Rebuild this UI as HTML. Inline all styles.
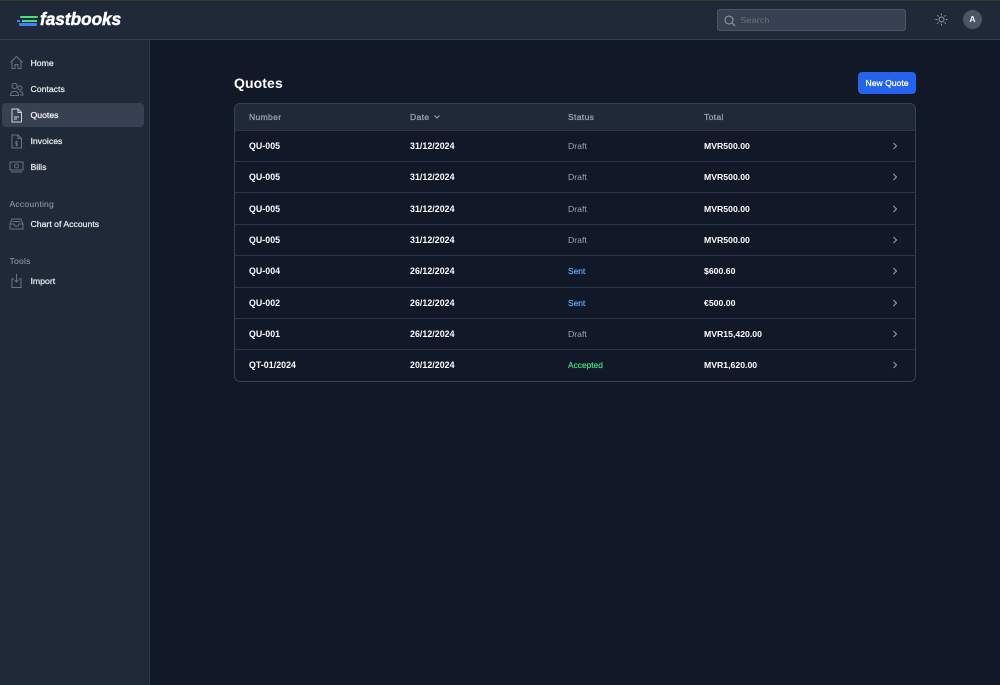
<!DOCTYPE html>
<html><head><meta charset="utf-8"><style>
*{box-sizing:border-box;margin:0;padding:0}
html,body{width:1000px;height:685px;overflow:hidden;background:#111827;font-family:"Liberation Sans",sans-serif;color:#fff}
.a{position:absolute;white-space:nowrap}
.nav{font-size:8.7px;color:#e5e7eb;left:30.5px;line-height:12px;-webkit-text-stroke:.25px #e5e7eb}
.sec{font-size:8.6px;color:#9ca3af;left:9.5px;line-height:12px;letter-spacing:.2px}
.th{font-size:8.6px;color:#9ca3af;line-height:12px;top:111px;letter-spacing:.3px;-webkit-text-stroke:.25px #9ca3af}
.c{font-size:8.8px;line-height:12px;font-weight:700;letter-spacing:.05px}
.m{font-size:8.7px;line-height:12px;font-weight:700;left:704px;letter-spacing:0}
.s{font-size:8.7px;line-height:12px;left:568px;letter-spacing:0}
.line{position:absolute;left:235px;width:680px;height:1px;background:#2b3544}
svg{position:absolute;fill:none}
.i{stroke:#6b7280;stroke-width:1}
</style></head><body>
<div class="a" style="left:0;top:0;width:1000px;height:40px;background:#1f2937;border-bottom:1px solid #374151"></div>
<div class="a" style="left:0;top:0;width:1000px;height:1px;background:#38342e"></div>
<div class="a" style="left:0;top:40px;width:150px;height:645px;background:#1f2937;border-right:1px solid #2c3646"></div>

<div class="a" style="left:20px;top:15.500px;width:18px;height:2.500px;background:#4ade80;border-radius:1px"></div>
<div class="a" style="left:17px;top:20px;width:3px;height:2px;background:#3b82f6"></div>
<div class="a" style="left:22px;top:20px;width:15px;height:2px;background:#4ade80"></div>
<div class="a" style="left:19px;top:23px;width:18px;height:3px;background:#3b82f6;border-radius:1px"></div>
<div class="a" style="left:40px;top:10px;font-size:17.200px;line-height:19px;font-weight:700;font-style:italic;letter-spacing:0;-webkit-text-stroke:.5px #fff">fastbooks</div>

<div class="a" style="left:717px;top:9px;width:189px;height:22px;background:#374151;border:1px solid #4b5563;border-radius:3px"></div>
<svg style="left:723px;top:13.500px" width="13" height="13" viewBox="0 0 13 13"><circle cx="6" cy="6" r="4" stroke="#9ca3af"/><path d="M9 9l3 3" stroke="#9ca3af"/></svg>
<div class="a" style="left:740.500px;top:14px;font-size:8.600px;line-height:12px;color:#6b7280;letter-spacing:.3px">Search</div>
<svg style="left:935px;top:13px" width="13" height="13" viewBox="0 0 13 13" stroke="#9ca3af" stroke-width=".9"><circle cx="6.500" cy="6.500" r="2.500"/><path d="M6.500 0.500v1.800M6.500 10.700v1.800M.5 6.500h1.800M10.700 6.500h1.800M2.300 2.300l1.200 1.200M9.500 9.500l1.200 1.200M2.300 10.700l1.200-1.200M9.500 3.500l1.200-1.200"/></svg>
<div class="a" style="left:963px;top:10px;width:19px;height:19px;border-radius:50%;background:#4b5563;font-size:8.600px;font-weight:700;line-height:19px;text-align:center;color:#f3f4f6">A</div>

<div class="a" style="left:2px;top:103px;width:142px;height:24px;background:#374151;border-radius:4px"></div>
<svg class="i" style="left:9px;top:55px" width="15" height="15" viewBox="0 0 15 15"><path d="M1.500 7.500L7.500 1.500l6 6M3 6.300V13.500h3V9.500h3v4h3V6.300"/></svg>
<svg class="i" style="left:9px;top:82px" width="15" height="15" viewBox="0 0 15 15"><circle cx="5.500" cy="4" r="2.600"/><circle cx="11" cy="6" r="2"/><path d="M1.500 13c0-5 8-5 8 0v.5h-8zM10.500 9.500c2.500-.3 3.500 1.500 3.500 3.500h-3"/></svg>
<svg style="left:10px;top:108px;stroke:#d1d5db" width="13" height="15" viewBox="0 0 13 15"><path d="M2 1h6l3.500 3.500V14H2zM8 1v3.500h3.500M4 9h5M4 11h3"/></svg>
<svg class="i" style="left:10px;top:134px" width="13" height="15" viewBox="0 0 13 15"><path d="M2 1h6l3.500 3.500V14H2zM8 1v3.500h3.500"/><path d="M7.700 7.500H5.800v2h1.500v2H5.300M6.500 6.500v6" stroke-width=".8"/></svg>
<svg class="i" style="left:9px;top:160px" width="15" height="14" viewBox="0 0 15 14"><rect x="1" y="2" width="13" height="8"/><circle cx="7.500" cy="6" r="2"/><path d="M2 12h11"/></svg>
<svg class="i" style="left:9px;top:217px" width="15" height="14" viewBox="0 0 15 14"><path d="M3 2h9l2 5v5H1V7zM1 7h4l1 2h3l1-2h4M3.500 4.500h8"/></svg>
<svg class="i" style="left:10px;top:273px" width="13" height="16" viewBox="0 0 13 16"><path d="M4 6H2v8.500h9V6H9M6.500 1v8M4.500 7l2 2 2-2"/></svg>

<div class="a nav" style="top:57px">Home</div>
<div class="a nav" style="top:83px">Contacts</div>
<div class="a nav" style="top:109px;color:#fff">Quotes</div>
<div class="a nav" style="top:135px">Invoices</div>
<div class="a nav" style="top:161px">Bills</div>
<div class="a sec" style="top:198px">Accounting</div>
<div class="a nav" style="top:218px">Chart of Accounts</div>
<div class="a sec" style="top:255px">Tools</div>
<div class="a nav" style="top:275px">Import</div>

<div class="a" style="left:234px;top:74px;font-size:14px;line-height:18px;font-weight:700;letter-spacing:.1px">Quotes</div>
<div class="a" style="left:858px;top:72px;width:58px;height:22px;background:#2563eb;border-radius:4px;font-size:8.600px;line-height:22px;text-align:center;-webkit-text-stroke:.25px #fff">New Quote</div>

<div class="a" style="left:234px;top:103px;width:682px;height:279px;border:1px solid #374151;border-radius:6px"></div>
<div class="a" style="left:235px;top:104px;width:680px;height:26px;background:#1f2937;border-radius:5px 5px 0 0"></div>
<div class="a th" style="left:249px">Number</div>
<div class="a th" style="left:410px">Date</div>
<svg style="left:433px;top:114px" width="8" height="6" viewBox="0 0 8 6"><path d="M1.500 1.500L4 4l2.500-2.500" stroke="#9ca3af"/></svg>
<div class="a th" style="left:568px">Status</div>
<div class="a th" style="left:704px">Total</div>

<div class="line" style="top:130px"></div><div class="line" style="top:161px"></div><div class="line" style="top:192px"></div><div class="line" style="top:224px"></div><div class="line" style="top:255px"></div><div class="line" style="top:287px"></div><div class="line" style="top:318px"></div><div class="line" style="top:349px"></div>

<div class="a c" style="left:249px;top:140px">QU-005</div><div class="a c" style="left:410px;top:140px">31/12/2024</div><div class="a s" style="top:140px;color:#9ca3af">Draft</div><div class="a m" style="top:140px">MVR500.00</div>
<div class="a c" style="left:249px;top:171px">QU-005</div><div class="a c" style="left:410px;top:171px">31/12/2024</div><div class="a s" style="top:171px;color:#9ca3af">Draft</div><div class="a m" style="top:171px">MVR500.00</div>
<div class="a c" style="left:249px;top:203px">QU-005</div><div class="a c" style="left:410px;top:203px">31/12/2024</div><div class="a s" style="top:203px;color:#9ca3af">Draft</div><div class="a m" style="top:203px">MVR500.00</div>
<div class="a c" style="left:249px;top:234px">QU-005</div><div class="a c" style="left:410px;top:234px">31/12/2024</div><div class="a s" style="top:234px;color:#9ca3af">Draft</div><div class="a m" style="top:234px">MVR500.00</div>
<div class="a c" style="left:249px;top:265px">QU-004</div><div class="a c" style="left:410px;top:265px">26/12/2024</div><div class="a s" style="top:265px;font-size:8.400px;color:#60a5fa;-webkit-text-stroke:.2px #60a5fa">Sent</div><div class="a m" style="top:265px">$600.60</div>
<div class="a c" style="left:249px;top:297px">QU-002</div><div class="a c" style="left:410px;top:297px">26/12/2024</div><div class="a s" style="top:297px;font-size:8.400px;color:#60a5fa;-webkit-text-stroke:.2px #60a5fa">Sent</div><div class="a m" style="top:297px">€500.00</div>
<div class="a c" style="left:249px;top:328px">QU-001</div><div class="a c" style="left:410px;top:328px">26/12/2024</div><div class="a s" style="top:328px;color:#9ca3af">Draft</div><div class="a m" style="top:328px">MVR15,420.00</div>
<div class="a c" style="left:249px;top:359px">QT-01/2024</div><div class="a c" style="left:410px;top:359px">20/12/2024</div><div class="a s" style="top:359px;font-size:8.400px;color:#4ade80;-webkit-text-stroke:.2px #4ade80">Accepted</div><div class="a m" style="top:359px">MVR1,620.00</div>

<svg style="left:891px;top:142px" width="8" height="8" viewBox="0 0 8 8"><path d="M2.500 1L5.500 4 2.500 7" stroke="#9ca3af"/></svg>
<svg style="left:891px;top:173px" width="8" height="8" viewBox="0 0 8 8"><path d="M2.500 1L5.500 4 2.500 7" stroke="#9ca3af"/></svg>
<svg style="left:891px;top:205px" width="8" height="8" viewBox="0 0 8 8"><path d="M2.500 1L5.500 4 2.500 7" stroke="#9ca3af"/></svg>
<svg style="left:891px;top:236px" width="8" height="8" viewBox="0 0 8 8"><path d="M2.500 1L5.500 4 2.500 7" stroke="#9ca3af"/></svg>
<svg style="left:891px;top:267px" width="8" height="8" viewBox="0 0 8 8"><path d="M2.500 1L5.500 4 2.500 7" stroke="#9ca3af"/></svg>
<svg style="left:891px;top:299px" width="8" height="8" viewBox="0 0 8 8"><path d="M2.500 1L5.500 4 2.500 7" stroke="#9ca3af"/></svg>
<svg style="left:891px;top:330px" width="8" height="8" viewBox="0 0 8 8"><path d="M2.500 1L5.500 4 2.500 7" stroke="#9ca3af"/></svg>
<svg style="left:891px;top:361px" width="8" height="8" viewBox="0 0 8 8"><path d="M2.500 1L5.500 4 2.500 7" stroke="#9ca3af"/></svg>
</body></html>
